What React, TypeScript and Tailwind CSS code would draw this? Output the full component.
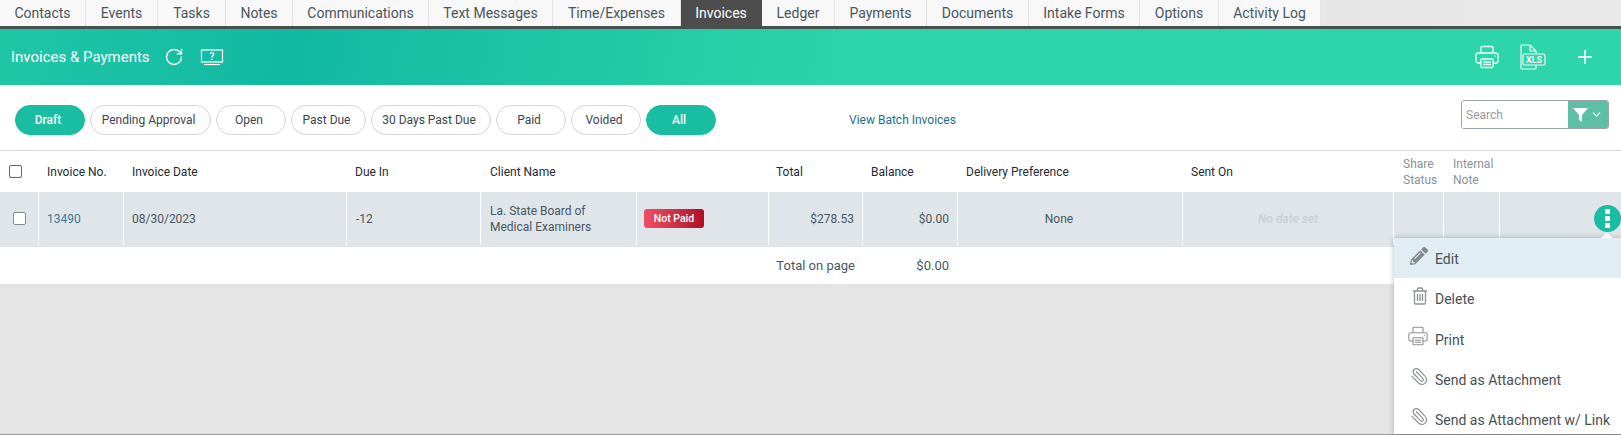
import React from "react";
import { FaPencilAlt } from "react-icons/fa";
import { Paperclip, RotateCw, ChevronDown } from "lucide-react";

const TABS = [
  { label: "Contacts", w: "w-[86px]" },
  { label: "Events", w: "w-[72px]" },
  { label: "Tasks", w: "w-[68px]" },
  { label: "Notes", w: "w-[67px]" },
  { label: "Communications", w: "w-[136px]" },
  { label: "Text Messages", w: "w-[124px]" },
  { label: "Time/Expenses", w: "w-[128px]" },
  { label: "Invoices", w: "w-[81px]" },
  { label: "Ledger", w: "w-[73px]" },
  { label: "Payments", w: "w-[92px]" },
  { label: "Documents", w: "w-[102px]" },
  { label: "Intake Forms", w: "w-[111px]" },
  { label: "Options", w: "w-[79px]" },
  { label: "Activity Log", w: "w-[102px]" },
];

const PILLS = [
  { label: "Draft", on: true, w: "w-[70px]" },
  { label: "Pending Approval", on: false, w: "w-[121px]" },
  { label: "Open", on: false, w: "w-[70px]" },
  { label: "Past Due", on: false, w: "w-[75px]" },
  { label: "30 Days Past Due", on: false, w: "w-[120px]" },
  { label: "Paid", on: false, w: "w-[70px]" },
  { label: "Voided", on: false, w: "w-[70px]" },
  { label: "All", on: true, w: "w-[70px]" },
];

const GRID = "grid grid-cols-[39px_85px_223px_134px_156px_132px_94px_95px_225px_211px_50px_56px_1fr]";
const CELL = "flex items-center px-[9px] border-r border-white";

function PrinterIcon({ size, color }: { size: number; color: string }) {
  return (
    <svg width={size} height={size} viewBox="0 0 24 24" fill="none" stroke={color} strokeWidth="1.3">
      <path d="M6 8V2.5a1 1 0 0 1 1-1h10a1 1 0 0 1 1 1V8" />
      <path d="M6 18H3a2 2 0 0 1-2-2v-6a2 2 0 0 1 2-2h18a2 2 0 0 1 2 2v6a2 2 0 0 1-2 2h-3" />
      <rect x="6" y="14" width="12" height="8.5" rx="0.5" />
      <path d="M8 17h8M8 19.5h8" />
      <circle cx="20" cy="11" r="0.7" fill={color} stroke="none" />
    </svg>
  );
}

function TrashIcon() {
  return (
    <svg width="16" height="18" viewBox="0 0 16 18" fill="none" stroke="#8e9194" strokeWidth="1.3">
      <path d="M1 4h14M5.5 4V2a1 1 0 0 1 1-1h3a1 1 0 0 1 1 1v2" />
      <path d="M2.5 4v12a1 1 0 0 0 1 1h9a1 1 0 0 0 1-1V4" />
      <path d="M5.5 7v7M8 7v7M10.5 7v7" />
    </svg>
  );
}

function XlsIcon() {
  return (
    <svg width="30" height="30" viewBox="0 0 30 30" fill="none" stroke="#e9fbf6" strokeWidth="1.2">
      <path d="M4 3h9l6 6v3M4 3v23a1 1 0 0 0 1 1h13a1 1 0 0 0 1-1v-3M13 3v6h6" />
      <rect x="6" y="12" width="22" height="11" rx="1.5" />
      <text x="17" y="21" textAnchor="middle" fontSize="9" fontWeight="700" fill="#fff" stroke="none" fontFamily="Roboto, sans-serif">XLS</text>
    </svg>
  );
}

function HelpIcon() {
  return (
    <svg width="24" height="17" viewBox="0 0 24 17" fill="none" stroke="#fff" strokeWidth="1.2">
      <rect x="1.5" y="1" width="21" height="12" />
      <path d="M4 15.5h16" />
      <text x="12" y="11" textAnchor="middle" fontSize="10" fontWeight="500" fill="#fff" stroke="none" fontFamily="Roboto, sans-serif">?</text>
    </svg>
  );
}

export default function App() {
  return (
    <div className="relative h-[435px] w-full overflow-hidden flex flex-col bg-[#e5e5e5] font-['Roboto',sans-serif] text-[12px]">
      {/* tabs */}
      <div className="flex h-[26px] shrink-0 bg-gradient-to-r from-[#dcdcdc] to-[#e9e9e9]">
        {TABS.map((t) => (
          <div
            key={t.label}
            className={`${t.w} flex items-center justify-center text-[14px] leading-none border-r ${t.label === "Invoices" ? "bg-[#4d4d4d] text-white border-[#4d4d4d]" : "bg-[#f8f8f8] text-[#4b5560] border-[#e2e2e2]"}`}
          >
            {t.label}
          </div>
        ))}
      </div>
      <div className="h-[3px] shrink-0 bg-[#4d4d4d]" />

      {/* green header */}
      <div className="h-[56px] shrink-0 flex items-center pl-[11px] text-white bg-[linear-gradient(100deg,#1fc6a6_0%,#12b9a2_18%,#2dd4a9_52%,#2fd5aa_100%)]">
        <span className="text-[15px]">Invoices &amp; Payments</span>
        <RotateCw size={20} strokeWidth={1.7} className="ml-[14px]" />
        <div className="ml-[16px] flex"><HelpIcon /></div>
        <div className="ml-auto flex items-center">
          <PrinterIcon size={24} color="#e9fbf6" />
          <div className="ml-[18px] flex"><XlsIcon /></div>
          <svg width="18" height="18" viewBox="0 0 18 18" stroke="#fff" strokeWidth="1.6" className="ml-[29px] mr-[27px]">
            <path d="M9 2v14M2 9h14" />
          </svg>
        </div>
      </div>

      {/* filters */}
      <div className="h-[66px] shrink-0 bg-white border-b border-[#d8d8d8] flex items-start pl-[15px] pr-[12px] pt-[15px]">
        <div className="flex gap-[5px] mt-[5px]">
          {PILLS.map((p) => (
            <div
              key={p.label}
              className={`${p.w} h-[30px] pr-[4px] flex items-center justify-center rounded-full border ${p.on ? "bg-[#19bda2] border-[#19bda2] text-white font-medium" : "bg-white border-[#d5d5d5] text-[#3c4650]"}`}
            >
              {p.label}
            </div>
          ))}
        </div>
        <a className="ml-[133px] mt-[11px] text-[#1c6f8f]">View Batch Invoices</a>
        <div className="ml-auto w-[148px] h-[29px] flex rounded-[3px] border border-[#9aa5ab] overflow-hidden">
          <div className="flex-1 flex items-center pl-[4px] text-[#9a9a9a] bg-white">Search</div>
          <div className="w-[40px] flex items-center justify-center gap-[2px] bg-[#5cbfa6] text-white">
            <svg width="15" height="15" viewBox="0 0 14 14" fill="#fff"><path d="M0 1h14L8.5 7.5V14L5.5 12V7.5z" /></svg>
            <ChevronDown size={13} strokeWidth={2} />
          </div>
        </div>
      </div>

      {/* table */}
      <div className={`${GRID} h-[41px] shrink-0 bg-white text-[#212b33]`}>
        <div className="flex items-center pl-[9px]">
          <span className="w-[13px] h-[13px] rounded-[2px] border border-[#666] bg-white" />
        </div>
        <div className="flex items-center px-[8px]">Invoice No.</div>
        <div className="flex items-center px-[8px]">Invoice Date</div>
        <div className="flex items-center px-[8px]">Due In</div>
        <div className="flex items-center px-[9px]">Client Name</div>
        <div />
        <div className="flex items-center pl-[7px]">Total</div>
        <div className="flex items-center pl-[8px]">Balance</div>
        <div className="flex items-center pl-[8px]">Delivery Preference</div>
        <div className="flex items-center pl-[8px]">Sent On</div>
        <div className="flex items-center pl-[9px] leading-[16px] text-[#8b9298]">Share Status</div>
        <div className="flex items-center pl-[9px] leading-[16px] text-[#8b9298]">Internal Note</div>
        <div />
      </div>

      <div className={`${GRID} h-[53px] shrink-0 bg-[#dfe5e8] text-[#4a5761]`}>
        <div className={`${CELL} !px-0 justify-center`}>
          <span className="w-[13px] h-[13px] rounded-[2px] border border-[#8a8a8a] bg-white" />
        </div>
        <div className={`${CELL} !px-[8px] text-[#3a7a98]`}>13490</div>
        <div className={`${CELL} !px-[8px]`}>08/30/2023</div>
        <div className={CELL}>-12</div>
        <div className={`${CELL} leading-[16px]`}>
          <span>La. State Board of<br />Medical Examiners</span>
        </div>
        <div className={`${CELL} !px-[7px]`}>
          <span className="w-[60px] h-[19px] flex items-center justify-center rounded-[3px] text-[10.5px] font-medium text-white bg-gradient-to-r from-[#f04e66] to-[#ae0c24]">Not Paid</span>
        </div>
        <div className={`${CELL} justify-end !pr-[8px]`}>$278.53</div>
        <div className={`${CELL} justify-end !pr-[8px]`}>$0.00</div>
        <div className={`${CELL} justify-center !pr-[22px] !pl-0`}>None</div>
        <div className={`${CELL} justify-center italic font-medium text-[#cbd0d3]`}>No date set</div>
        <div className={CELL} />
        <div className={CELL} />
        <div className="flex items-center justify-end">
          <span className="w-[27px] h-[27px] rounded-full bg-[#19bda2] flex flex-col items-center justify-center gap-[2px]">
            <i className="w-[5px] h-[5px] rounded-[1px] bg-white" />
            <i className="w-[5px] h-[5px] rounded-[1px] bg-white" />
            <i className="w-[5px] h-[5px] rounded-[1px] bg-white" />
          </span>
        </div>
      </div>

      <div className={`${GRID} h-[38px] shrink-0 bg-white border-t border-[#dfe5e8] text-[#4a5761] mt-[1px]`}>
        <div className="col-span-6" />
        <div className="flex items-center justify-end pr-[8px] whitespace-nowrap text-[13px]">Total on page</div>
        <div className="flex items-center justify-end pr-[9px] text-[13px]">$0.00</div>
      </div>

      <div className="flex-1 border-b border-[#9a9a9a]" />

      {/* action menu */}
      <div className="absolute left-[1394px] right-0 top-[238px] bottom-[1px] bg-white shadow-[0_0_6px_rgba(0,0,0,0.25)] text-[14px] text-[#4a4f55]">
        <span className="absolute -top-[5px] left-[207px] w-0 h-0 border-x-[6px] border-x-transparent border-b-[5px] border-b-white" />
        <div className="h-[40px] pt-[2px] bg-[#e0eef4] flex items-center pl-[41px] relative">
          <FaPencilAlt size={18} className="absolute left-[16px] top-[9px] text-[#85888b]" />
          Edit
        </div>
        <div className="h-[41px] pt-[2px] flex items-center pl-[41px] relative">
          <span className="absolute left-[18px] top-[9px] flex"><TrashIcon /></span>
          Delete
        </div>
        <div className="h-[40px] pt-[2px] flex items-center pl-[41px] relative">
          <span className="absolute left-[14px] top-[7px] flex"><PrinterIcon size={20} color="#8e9194" /></span>
          Print
        </div>
        <div className="h-[40px] pt-[2px] flex items-center pl-[41px] relative">
          <Paperclip size={19} strokeWidth={1.4} className="absolute left-[16px] top-[8px] -scale-x-100 text-[#8e9194]" />
          Send as Attachment
        </div>
        <div className="h-[40px] pt-[2px] flex items-center pl-[41px] relative">
          <Paperclip size={19} strokeWidth={1.4} className="absolute left-[16px] top-[8px] -scale-x-100 text-[#8e9194]" />
          Send as Attachment w/ Link
        </div>
      </div>
    </div>
  );
}
